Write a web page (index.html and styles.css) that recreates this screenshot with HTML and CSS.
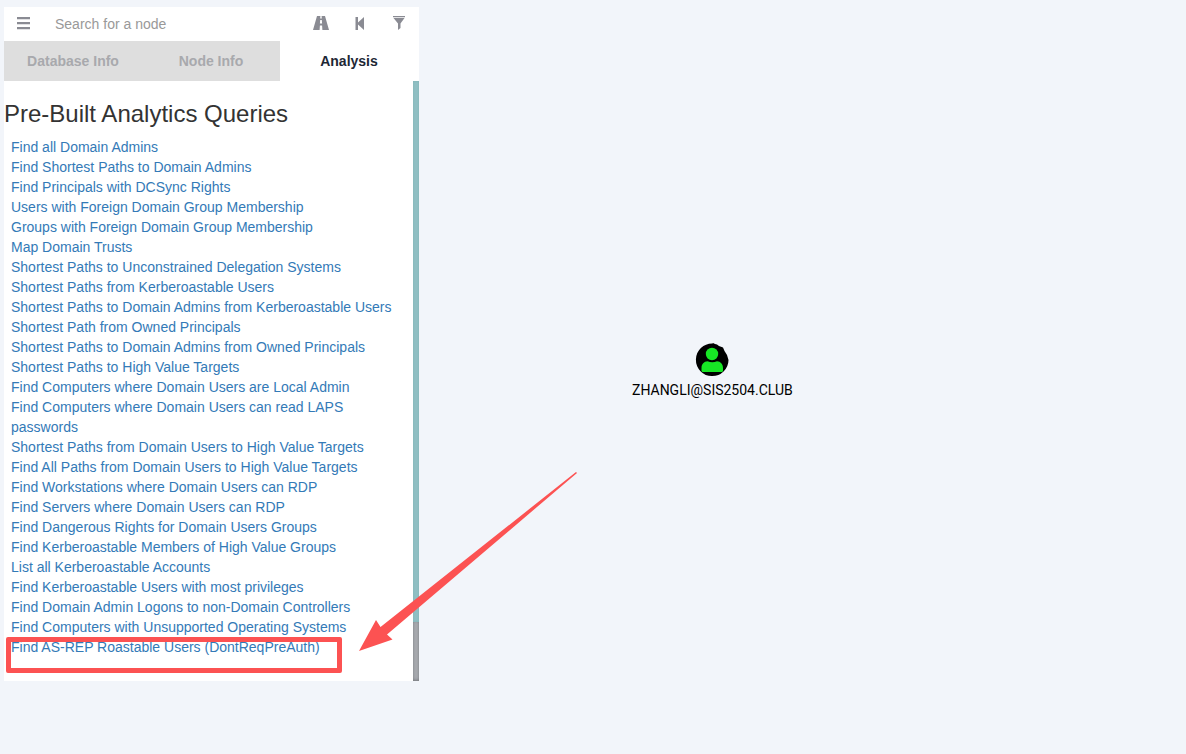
FILE: index.html
```html
<!DOCTYPE html>
<html lang="en">
<head>
<meta charset="utf-8">
<title>Graph Analysis</title>
<link rel="stylesheet" href="styles.css">
</head>
<body>
<aside class="panel">
  <form class="search">
    <button class="icon-btn" type="button" aria-label="Menu">
      <svg width="14" height="14" viewBox="0 0 14 14"><path d="M1 1h13v2.300H1zM1 6h13v2.300H1zM1 11h13v2.300H1z"/></svg>
    </button>
    <input class="search-input" type="text" placeholder="Search for a node" aria-label="Search for a node">
    <button class="icon-btn" type="button" aria-label="Pathfinding">
      <svg width="16" height="14" viewBox="0 0 16 14"><path d="M4 0h3.400l-.2 2.500h1.600L8.600 0H12l4 14H9.400l-.3-4.500H6.900L6.600 14H0zM7.200 4l-.3 3.500h2.200L8.800 4z"/></svg>
    </button>
    <button class="icon-btn" type="button" aria-label="Back">
      <svg width="14" height="14" viewBox="0 0 14 14"><path d="M2.500 1h2.500v5.500L11 1v13L5 8.500V14H2.500z"/></svg>
    </button>
    <button class="icon-btn" type="button" aria-label="Filter">
      <svg width="12" height="14" viewBox="0 0 12 14"><path d="M0 0h12v1.200H0zM.5 2h11L7.500 7.500V12L5 14V7.500z"/></svg>
    </button>
  </form>
  <nav class="tabs">
    <button class="tab" type="button">Database Info</button>
    <button class="tab" type="button">Node Info</button>
    <button class="tab tab-active" type="button">Analysis</button>
  </nav>
  <div class="content">
    <section class="queries">
      <h3 class="title">Pre-Built Analytics Queries</h3>
      <ul class="list">
        <li><a href="#">Find all Domain Admins</a></li>
        <li><a href="#">Find Shortest Paths to Domain Admins</a></li>
        <li><a href="#">Find Principals with DCSync Rights</a></li>
        <li><a href="#">Users with Foreign Domain Group Membership</a></li>
        <li><a href="#">Groups with Foreign Domain Group Membership</a></li>
        <li><a href="#">Map Domain Trusts</a></li>
        <li><a href="#">Shortest Paths to Unconstrained Delegation Systems</a></li>
        <li><a href="#">Shortest Paths from Kerberoastable Users</a></li>
        <li><a href="#">Shortest Paths to Domain Admins from Kerberoastable Users</a></li>
        <li><a href="#">Shortest Path from Owned Principals</a></li>
        <li><a href="#">Shortest Paths to Domain Admins from Owned Principals</a></li>
        <li><a href="#">Shortest Paths to High Value Targets</a></li>
        <li><a href="#">Find Computers where Domain Users are Local Admin</a></li>
        <li><a href="#">Find Computers where Domain Users can read LAPS passwords</a></li>
        <li><a href="#">Shortest Paths from Domain Users to High Value Targets</a></li>
        <li><a href="#">Find All Paths from Domain Users to High Value Targets</a></li>
        <li><a href="#">Find Workstations where Domain Users can RDP</a></li>
        <li><a href="#">Find Servers where Domain Users can RDP</a></li>
        <li><a href="#">Find Dangerous Rights for Domain Users Groups</a></li>
        <li><a href="#">Find Kerberoastable Members of High Value Groups</a></li>
        <li><a href="#">List all Kerberoastable Accounts</a></li>
        <li><a href="#">Find Kerberoastable Users with most privileges</a></li>
        <li><a href="#">Find Domain Admin Logons to non-Domain Controllers</a></li>
        <li><a href="#">Find Computers with Unsupported Operating Systems</a></li>
        <li><a href="#">Find AS-REP Roastable Users (DontReqPreAuth)</a></li>
      </ul>
    </section>
    <div class="scrollbar"><div class="thumb"></div><div class="track"></div></div>
  </div>
</aside>
<main class="graph">
  <div class="node">
    <svg width="34" height="34" viewBox="0 0 34 34">
      <path d="M17.500 .5l.5-.5 2 1 2 .5 2 1.500 4 1.500 1.500 3.500 2.500 4 1.500 5A16.300 16.300 0 1 1 17.500 .5z"/>
      <circle class="user" cx="17" cy="11" r="6.200"/>
      <path class="user" d="M8 29c-1 0-1.500-.6-1.500-1.500V25c0-4 2.500-6.500 6-6.700 3 1.300 6.500 1.300 9.500 0 3.500.2 6 2.700 6 6.700v2.500c0 .9-.5 1.500-1.500 1.500z"/>
    </svg>
    <span class="node-label">ZHANGLI@SIS2504.CLUB</span>
  </div>
</main>
<div class="mark-box"></div>
<svg class="mark-arrow" width="220" height="182" viewBox="0 0 220 182"><path d="M218 2L219 3 29 164.500l5.500 5L1 181 18 150l4.500 7z"/></svg>
</body>
</html>
```
FILE: styles.css
```css
* { box-sizing: border-box; }

body {
  position: relative;
  display: flex;
  min-height: 100vh;
  margin: 0;
  background: #f2f5fa;
  color: #333;
  font: 14px/20px "Liberation Sans", Arial, sans-serif;
}

button, input {
  border: 0;
  padding: 0;
  background: none;
  font: inherit;
}

.panel {
  flex: 0 0 415px;
  align-self: flex-start;
  margin: 7px 0 0 4px;
  background: #fff;
}

.search {
  display: flex;
  align-items: center;
  height: 34px;
  padding-right: 1px;
}

.icon-btn {
  display: flex;
  flex: 0 0 39px;
  align-items: center;
  justify-content: center;
  height: 32px;
  margin-bottom: 2px;
}

.icon-btn:first-child { flex-basis: 38px; }

.icon-btn svg { fill: #8a8b93; }

.search-input {
  flex: 1;
  min-width: 0;
  height: 34px;
  padding: 0 13px;
}

.search-input::placeholder { color: #999; opacity: 1; }

.tabs {
  display: flex;
  padding-right: 1px;
}

.tab {
  flex: 1;
  height: 40px;
  background: #dedede;
  color: #a8a9ad;
  font-weight: bold;
}

.tab-active { background: #fff; color: #1d2735; }

.content { display: flex; }

.queries { flex: 1; padding: 20px 0 24px; }

.title {
  margin: 0 0 10px;
  font-size: 24px;
  font-weight: normal;
  line-height: 26px;
}

.list {
  margin: 0;
  padding: 0 7px;
  list-style: none;
}

.list a { color: #337ab7; text-decoration: none; }

.scrollbar {
  display: flex;
  flex: 0 0 6px;
  flex-direction: column;
}

.thumb {
  flex: 541;
  background: #90bfc3;
  box-shadow: inset 0 0 2px #7fb0b4;
}

.track {
  flex: 59;
  background: #a8abb0;
  box-shadow: inset 0 -1px 3px #77797d;
}

.graph { flex: 1; position: relative; }

.node {
  position: absolute;
  top: 343px;
  left: 213px;
  display: flex;
  flex-direction: column;
  align-items: center;
}

.user { fill: #17e625; }

.node-label {
  margin-top: 3px;
  color: #000;
  font: 14px/20px Roboto, sans-serif;
}

.mark-box {
  position: absolute;
  top: 637px;
  left: 6px;
  width: 336px;
  height: 36px;
  border: 5px solid #fc5252;
  border-radius: 2px;
}

.mark-arrow {
  position: absolute;
  top: 470px;
  left: 358px;
  fill: #fc5252;
}
```
